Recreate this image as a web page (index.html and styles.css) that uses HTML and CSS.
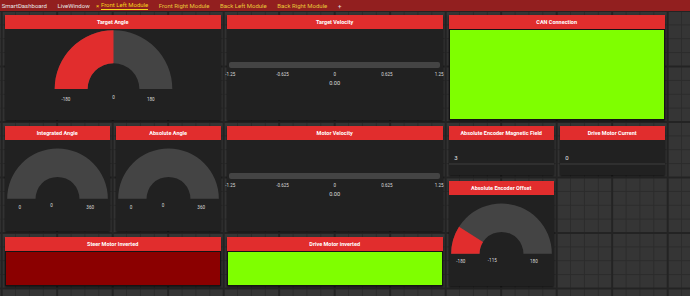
FILE: index.html
```html
<!DOCTYPE html>
<html lang="en">
<head>
  <meta charset="UTF-8">
  <title>SmartDashboard - Front Left Module</title>
  <link rel="stylesheet" href="styles.css">
</head>
<body>
  <!-- Tab bar -->
  <header class="tabbar">
    <span class="tab tab-plain">SmartDashboard</span>
    <span class="tab tab-plain">LiveWindow</span>
    <span class="tab tab-active"><span class="tab-close">×</span><span class="tab-label">Front Left Module</span></span>
    <span class="tab">Front Right Module</span>
    <span class="tab">Back Left Module</span>
    <span class="tab">Back Right Module</span>
    <span class="tab tab-add">+</span>
  </header>

  <!-- Widget board -->
  <main class="board">

    <section class="widget target-angle">
      <div class="widget-title">Target Angle</div>
      <div class="widget-body">
        <svg class="gauge" viewBox="0 0 216 91">
          <path class="gauge-track" d="M49.5 60.3 A59 59 0 0 1 167.5 60.3 L134.5 60.3 A26 26 0 0 0 82.5 60.3 Z"/>
          <path class="gauge-fill" d="M49.5 60.3 A59 59 0 0 1 108.5 1.3 L108.5 34.3 A26 26 0 0 0 82.5 60.3 Z"/>
          <text x="56.3" y="70.3">-180</text>
          <text class="mid" x="108.6" y="68.3">0</text>
          <text x="142" y="70.3">180</text>
        </svg>
      </div>
    </section>

    <section class="widget target-velocity">
      <div class="widget-title">Target Velocity</div>
      <div class="widget-body numbar">
        <div class="bar"></div>
        <div class="ticks">
          <span>-1.25</span><span>-0.625</span><span>0</span><span>0.625</span><span>1.25</span>
        </div>
        <div class="numbar-value">0.00</div>
      </div>
    </section>

    <section class="widget can-connection">
      <div class="widget-title">CAN Connection</div>
      <div class="widget-body boolbox is-true"></div>
    </section>

    <section class="widget integrated-angle">
      <div class="widget-title">Integrated Angle</div>
      <div class="widget-body">
        <svg class="gauge" viewBox="0 0 105 91">
          <path class="gauge-track" d="M2 59 A50.5 50.5 0 0 1 103 59 L74.5 59 A22 22 0 0 0 30.5 59 Z"/>
          <text class="mid" x="14.6" y="67.3">0</text>
          <text class="mid" x="46.5" y="65.7">0</text>
          <text class="mid" x="85.3" y="67.3">360</text>
        </svg>
      </div>
    </section>

    <section class="widget absolute-angle">
      <div class="widget-title">Absolute Angle</div>
      <div class="widget-body">
        <svg class="gauge" viewBox="0 0 105 91">
          <path class="gauge-track" d="M2 59 A50.5 50.5 0 0 1 103 59 L74.5 59 A22 22 0 0 0 30.5 59 Z"/>
          <text class="mid" x="15" y="67.3">0</text>
          <text class="mid" x="47" y="65.7">0</text>
          <text class="mid" x="85.3" y="67.3">360</text>
        </svg>
      </div>
    </section>

    <section class="widget motor-velocity">
      <div class="widget-title">Motor Velocity</div>
      <div class="widget-body numbar">
        <div class="bar"></div>
        <div class="ticks">
          <span>-1.25</span><span>-0.625</span><span>0</span><span>0.625</span><span>1.25</span>
        </div>
        <div class="numbar-value">0.00</div>
      </div>
    </section>

    <section class="widget magnetic-field">
      <div class="widget-title">Absolute Encoder Magnetic Field</div>
      <div class="widget-body textview">
        <div class="text-value">3</div>
      </div>
    </section>

    <section class="widget drive-current">
      <div class="widget-title">Drive Motor Current</div>
      <div class="widget-body textview">
        <div class="text-value">0</div>
      </div>
    </section>

    <section class="widget encoder-offset">
      <div class="widget-title">Absolute Encoder Offset</div>
      <div class="widget-body">
        <svg class="gauge" viewBox="0 0 105 91">
          <path class="gauge-track" d="M2 59 A50.5 50.5 0 0 1 103 59 L74.5 59 A22 22 0 0 0 30.5 59 Z"/>
          <path class="gauge-fill" d="M2 59 A50.5 50.5 0 0 1 9.9 31.9 L33.95 47.2 A22 22 0 0 0 30.5 59 Z"/>
          <text class="mid" x="11.7" y="67.2">-180</text>
          <text class="mid" x="43.3" y="65.5">-115</text>
          <text class="mid" x="85" y="67.2">180</text>
        </svg>
      </div>
    </section>

    <section class="widget steer-inverted">
      <div class="widget-title">Steer Motor Inverted</div>
      <div class="widget-body boolbox is-false"></div>
    </section>

    <section class="widget drive-inverted">
      <div class="widget-title">Drive Motor inverted</div>
      <div class="widget-body boolbox is-true"></div>
    </section>

  </main>
</body>
</html>
```

FILE: styles.css
```css
/* Base */
* {
  margin: 0;
  padding: 0;
  box-sizing: border-box;
}

html, body {
  width: 690px;
  height: 296px;
  overflow: hidden;
}

body {
  font-family: Roboto, "Liberation Sans", sans-serif;
  background-color: #343434;
  display: flex;
  flex-direction: column;
}

/* Tab bar */
.tabbar {
  height: 10.8px;
  flex-shrink: 0;
  background-color: #921f1f;
  display: flex;
  align-items: center;
  padding-left: 1.7px;
  font-size: 6px;
  white-space: nowrap;
}

.tab {
  color: #e9c83a;
  margin-right: 10.6px;
  line-height: 9px;
}

.tab-plain {
  color: #e6e6e6;
}

.tab-active {
  display: flex;
  align-items: center;
  color: #f5d31c;
  margin-left: -4.2px;
}

.tab-close {
  margin-right: 1.6px;
}

.tab-label {
  border-bottom: 1px solid #f5d31c;
}

.tab-add {
  color: #e6e6e6;
}

/* Board with grid lines */
.board {
  flex: 1;
  display: grid;
  grid-template-columns: repeat(12, 49.5px);
  grid-template-rows: repeat(5, 49.5px);
  gap: 6px;
  padding: 3.9px 0 0 4.7px;
  background-color: #353535;
  background-image:
    linear-gradient(to right, #232323 2px, transparent 2px),
    linear-gradient(to bottom, #232323 2px, transparent 2px),
    linear-gradient(to right, #2b2b2b 1px, transparent 1px),
    linear-gradient(to bottom, #2b2b2b 1px, transparent 1px);
  background-size: 55.5px 55.5px, 55.5px 55.5px, 13.875px 13.875px, 13.875px 13.875px;
  background-position: 0.7px -1px, 0.7px -1px, 1.2px -0.5px, 1.2px -0.5px;
}

/* Widget placement */
.target-angle     { grid-column: 1 / span 4;  grid-row: 1 / span 2; }
.target-velocity  { grid-column: 5 / span 4;  grid-row: 1 / span 2; }
.can-connection   { grid-column: 9 / span 4;  grid-row: 1 / span 2; }
.integrated-angle { grid-column: 1 / span 2;  grid-row: 3 / span 2; }
.absolute-angle   { grid-column: 3 / span 2;  grid-row: 3 / span 2; }
.motor-velocity   { grid-column: 5 / span 4;  grid-row: 3 / span 2; }
.magnetic-field   { grid-column: 9 / span 2;  grid-row: 3; }
.drive-current    { grid-column: 11 / span 2; grid-row: 3; }
.encoder-offset   { grid-column: 9 / span 2;  grid-row: 4 / span 2; }
.steer-inverted   { grid-column: 1 / span 4;  grid-row: 5; }
.drive-inverted   { grid-column: 5 / span 4;  grid-row: 5; }

/* Widget frame */
.widget {
  display: flex;
  flex-direction: column;
  background-color: #212121;
  box-shadow: 0 1px 2px rgba(0, 0, 0, 0.7);
  min-width: 0;
}

.widget-title {
  height: 14.3px;
  flex-shrink: 0;
  background-color: #e12d2d;
  color: #fff;
  font-size: 5.5px;
  font-weight: bold;
  display: flex;
  align-items: center;
  justify-content: center;
  white-space: nowrap;
}

.widget-body {
  flex: 1;
  min-height: 0;
  position: relative;
}

/* Gauge */
.gauge {
  display: block;
  width: 100%;
  height: 100%;
}

.gauge-track {
  fill: #444;
}

.gauge-fill {
  fill: #e12d2d;
}

.gauge text {
  fill: #dcdcdc;
  font-family: Roboto, "Liberation Sans", sans-serif;
  font-size: 4.6px;
  dominant-baseline: central;
}

.gauge text.mid {
  text-anchor: middle;
}

/* Number bar */
.numbar {
  display: flex;
  flex-direction: column;
  color: #dcdcdc;
}

.bar {
  height: 6px;
  margin: 32.7px 2.7px 0;
  background-color: #444;
  border-radius: 2px;
}

.ticks {
  display: flex;
  justify-content: space-between;
  padding: 0 3.6px 0 3.7px;
  margin-top: 4.8px;
  font-size: 4.5px;
  line-height: 5px;
}

.ticks span {
  width: 0;
  display: flex;
  justify-content: center;
  white-space: nowrap;
}

.numbar-value {
  text-align: center;
  font-size: 5.7px;
  line-height: 7px;
  margin-top: 2.3px;
}

/* Text view */
.text-value {
  color: #e6e6e6;
  font-size: 6px;
  height: 25px;
  padding: 14px 0 0 5.5px;
  line-height: 7px;
  border-bottom: 2px solid #2f2f2f;
}

/* Boolean box */
.boolbox {
  border: 1px solid #141414;
  border-top-width: 1.5px;
}

.boolbox.is-true {
  background-color: #7fff00;
}

.boolbox.is-false {
  background-color: #8b0000;
}
```
